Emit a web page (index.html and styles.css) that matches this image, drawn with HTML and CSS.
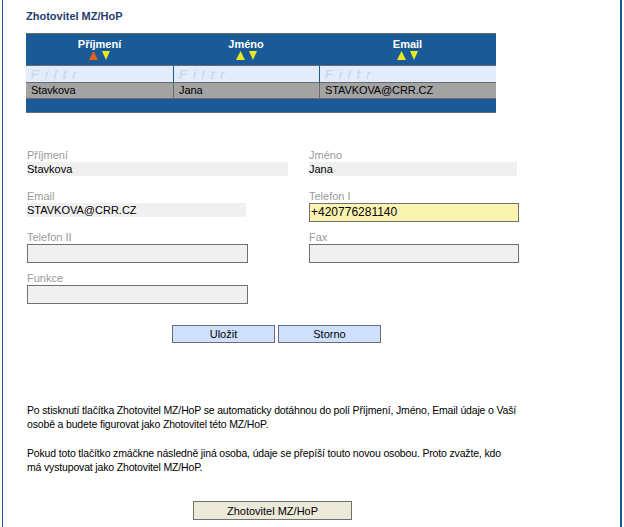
FILE: index.html
```html
<!DOCTYPE html>
<html lang="cs">
<head>
<meta charset="utf-8">
<title>Zhotovitel MZ/HoP</title>
<link rel="stylesheet" href="styles.css">
</head>
<body>
<div class="page">
  <h1 class="title">Zhotovitel MZ/HoP</h1>

  <div class="grid">
    <div class="row head">
      <div class="hcell">Příjmení
        <div class="sort">
          <svg width="9" height="9" viewBox="0 0 9 9"><polygon points="4.5,0 9,9 0,9" fill="#e0601c"/></svg>
          <svg width="8" height="9" viewBox="0 0 8 9"><polygon points="0,0 8,0 4,9" fill="#eaea24"/></svg>
        </div>
      </div>
      <div class="hcell">Jméno
        <div class="sort">
          <svg width="9" height="9" viewBox="0 0 9 9"><polygon points="4.5,0 9,9 0,9" fill="#eaea24"/></svg>
          <svg width="8" height="9" viewBox="0 0 8 9"><polygon points="0,0 8,0 4,9" fill="#eaea24"/></svg>
        </div>
      </div>
      <div class="hcell">Email
        <div class="sort">
          <svg width="9" height="9" viewBox="0 0 9 9"><polygon points="4.5,0 9,9 0,9" fill="#eaea24"/></svg>
          <svg width="8" height="9" viewBox="0 0 8 9"><polygon points="0,0 8,0 4,9" fill="#eaea24"/></svg>
        </div>
      </div>
    </div>
    <div class="row filter">
      <div class="fcell">Filtr</div>
      <div class="fcell sep">Filtr</div>
      <div class="fcell sep">Filtr</div>
    </div>
    <div class="row data">
      <div class="dcell">Stavkova</div>
      <div class="dcell sep">Jana</div>
      <div class="dcell sep">STAVKOVA@CRR.CZ</div>
    </div>
    <div class="foot"></div>
  </div>

  <div class="form">
    <div class="field">
      <div class="label">Příjmení</div>
      <div class="ro w261">Stavkova</div>
    </div>
    <div class="field">
      <div class="label">Jméno</div>
      <div class="ro w208">Jana</div>
    </div>
    <div class="field">
      <div class="label">Email</div>
      <div class="ro w219">STAVKOVA@CRR.CZ</div>
    </div>
    <div class="field">
      <div class="label">Telefon I</div>
      <div class="inp w210 focus">+420776281140</div>
    </div>
    <div class="field">
      <div class="label">Telefon II</div>
      <div class="inp w221"></div>
    </div>
    <div class="field">
      <div class="label">Fax</div>
      <div class="inp w210"></div>
    </div>
    <div class="field">
      <div class="label">Funkce</div>
      <div class="inp w221"></div>
    </div>
  </div>

  <div class="actions">
    <button class="btn">Uložit</button>
    <button class="btn">Storno</button>
  </div>

  <div class="info">
    <p>Po stisknutí tlačítka Zhotovitel MZ/HoP se automaticky dotáhnou do polí Příjmení, Jméno, Email údaje o Vaší osobě a budete figurovat jako Zhotovitel této MZ/HoP.</p>
    <p>Pokud toto tlačítko zmáčkne následně jiná osoba, údaje se přepíší touto novou osobou. Proto zvažte, kdo<br>má vystupovat jako Zhotovitel MZ/HoP.</p>
  </div>

  <div class="bottom">
    <button class="btn2">Zhotovitel MZ/HoP</button>
  </div>
</div>
</body>
</html>
```

FILE: styles.css
```css
* { box-sizing: border-box; }
html, body { margin: 0; padding: 0; background: #fff; }
body {
  font-family: "Liberation Sans", Arial, sans-serif;
  font-size: 11px;
  color: #000;
}
.page {
  width: 620px;
  margin-left: 2px;
  min-height: 600px;
  border-left: 1px solid #1a5a96;
  border-right: 2px solid #1a5a96;
  padding: 9px 0 0 23px;
}
.title {
  margin: 0;
  font-size: 11px;
  line-height: 14px;
  font-weight: bold;
  color: #1f3c6e;
}
.grid {
  width: 470px;
  margin-top: 10px;
  border-top: 1px solid #6a6a6a;
  border-bottom: 1px solid #6a6a6a;
}
.row {
  display: grid;
  grid-template-columns: 147px 146px 177px;
}
.head {
  height: 31px;
  background: #1a5a96;
}
.hcell {
  color: #fff;
  font-weight: bold;
  text-align: center;
  line-height: 13px;
  padding-top: 4px;
}
.sort {
  display: flex;
  justify-content: center;
  gap: 4px;
  margin-top: 0;
}
.sort svg { display: block; }
.filter {
  height: 17px;
  border-top: 1px solid #6a6a6a;
  background: #e2ecfc;
}
.fcell {
  font-size: 13px;
  font-style: italic;
  letter-spacing: 6px;
  color: #cdd2da;
  line-height: 17px;
  padding-left: 5px;
}
.fcell.sep { border-left: 1px solid #1a5a96; }
.data {
  height: 16px;
  border-top: 1px solid #6a6a6a;
  background: #a3a3a3;
}
.dcell {
  line-height: 15px;
  padding-left: 5px;
  letter-spacing: -0.1px;
}
.dcell.sep { border-left: 1px solid #6a6a6a; }
.foot {
  height: 14px;
  border-top: 1px solid #6a6a6a;
  background: #1a5a96;
}
.form {
  margin-top: 36px;
  padding-left: 1px;
  display: grid;
  grid-template-columns: 282px 1fr;
  grid-auto-rows: 41px;
}
.label {
  color: #9a9a9a;
  line-height: 12px;
  height: 13px;
}
.ro {
  height: 14px;
  line-height: 14px;
  background: #f0f0f0;
}
.inp {
  height: 19px;
  line-height: 17px;
  border: 1px solid #707070;
  background: #f0f0f0;
  padding-left: 1px;
  font-size: 12px;
}
.inp.focus { background: #fbf4b0; }
.w261 { width: 261px; }
.w208 { width: 208px; }
.w219 { width: 219px; }
.w210 { width: 210px; }
.w221 { width: 221px; }
.actions {
  margin-top: 12px;
  padding-left: 146px;
  display: flex;
  gap: 3px;
}
.btn {
  width: 103px;
  height: 18px;
  padding: 0;
  font-family: inherit;
  font-size: 11px;
  font-weight: normal;
  color: #000;
  background: #cfe0fc;
  border: 1px solid #6a6a7c;
  border-radius: 0;
}
.info {
  margin-top: 60px;
  padding-left: 1px;
  width: 504px;
  font-size: 10.5px;
  letter-spacing: -0.16px;
}
.info p {
  margin: 0 0 15px;
  line-height: 14px;
}
.bottom {
  margin-top: 27px;
  padding-left: 167px;
}
.btn2 {
  width: 159px;
  height: 19px;
  padding: 0;
  font-family: inherit;
  font-size: 11px;
  font-weight: normal;
  color: #000;
  background: #ece9d8;
  border: 1px solid #707070;
  border-radius: 0;
}
```
